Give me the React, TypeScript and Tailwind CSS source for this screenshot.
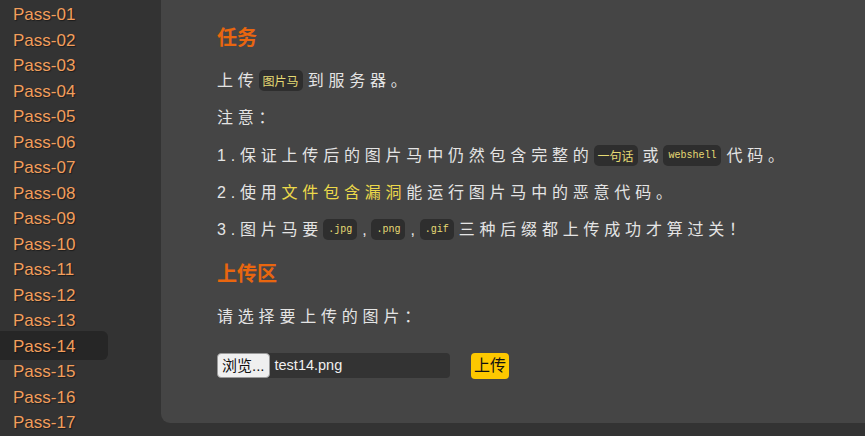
import React from "react";

const passes = Array.from({ length: 17 }, (_, i) => `Pass-${String(i + 1).padStart(2, "0")}`);

function Code({ children, mono }: { children: React.ReactNode; mono?: boolean }) {
  return (
    <code
      className={
        "inline-block align-middle rounded-[5px] bg-[#2e2e2e] text-[#e6db74] tracking-normal leading-[21px] ml-0 mr-[5px] " +
        (mono
          ? "px-[5px] text-[10px] [font-family:'Liberation_Mono','Noto_Sans_CJK_SC',monospace]"
          : "px-[4px] text-[12px] [font-family:'Noto_Sans_CJK_SC',sans-serif]")
      }
      style={{ position: "relative", top: "-1px" }}
    >
      {children}
    </code>
  );
}

export default function App() {
  return (
    <div className="w-[865px] h-[436px] overflow-hidden bg-[#333333] flex [font-family:'Liberation_Sans','Noto_Sans_CJK_SC',sans-serif]">
      <nav className="w-[161px] shrink-0 pt-[2px]">
        {passes.map((p) => (
          <div key={p} className="relative h-[25.5px]">
            {p === "Pass-14" && (
              <div className="absolute left-0 top-[-3px] bottom-[-1px] w-[108px] rounded-r-md bg-[#262626]" />
            )}
            <span className="relative block pl-[13px] text-[17px] leading-[25.5px] text-[#f29e5c] [text-shadow:1px_1px_1px_rgba(0,0,0,0.45)]">
              {p}
            </span>
          </div>
        ))}
      </nav>
      <main className="flex-1 self-start bg-[#454545] rounded-bl-[9px] pl-[56px] pt-[24px] pb-[44px] text-[#e4e4e4]">
        <h2 className="text-[20px] leading-[28px] font-bold text-[#e9660f] mb-[10px]">任务</h2>
        <div className="text-[16px] tracking-[4.8px] [&>p]:leading-[37.3px] [&>p]:whitespace-nowrap">
          <p>
            上传<Code>图片马</Code>到服务器。
          </p>
          <p>注意：</p>
          <p>
            1.保证上传后的图片马中仍然包含完整的<Code>一句话</Code>或<Code mono>webshell</Code>代码。
          </p>
          <p>
            2.使用<span className="text-[#ecd94a]">文件包含漏洞</span>能运行图片马中的恶意代码。
          </p>
          <p>
            3.图片马要<Code mono>.jpg</Code>,<Code mono>.png</Code>,<Code mono>.gif</Code>三种后缀都上传成功才算过关！
          </p>
        </div>
        <h2 className="text-[20px] leading-[28px] font-bold text-[#e9660f] mt-[12px] mb-[10px]">上传区</h2>
        <p className="text-[16px] tracking-[4.8px] leading-[37.3px]">请选择要上传的图片：</p>
        <div className="mt-[17px] flex items-center">
          <div className="w-[233px] h-[25px] rounded-[4px] bg-[#333333] flex items-center">
            <div className="h-[25px] px-[4px] flex items-center rounded-[4px] border border-[#9a9a9a] bg-[#efefef] text-[15px] text-[#111]">
              浏览...
            </div>
            <span className="ml-[5px] text-[14.5px] text-[#f0f0f0]">test14.png</span>
          </div>
          <div className="ml-[21px] h-[26px] w-[38px] rounded-[4px] bg-[#fdc800] flex items-center justify-center text-[16px] text-[#111]">
            上传
          </div>
        </div>
      </main>
    </div>
  );
}
